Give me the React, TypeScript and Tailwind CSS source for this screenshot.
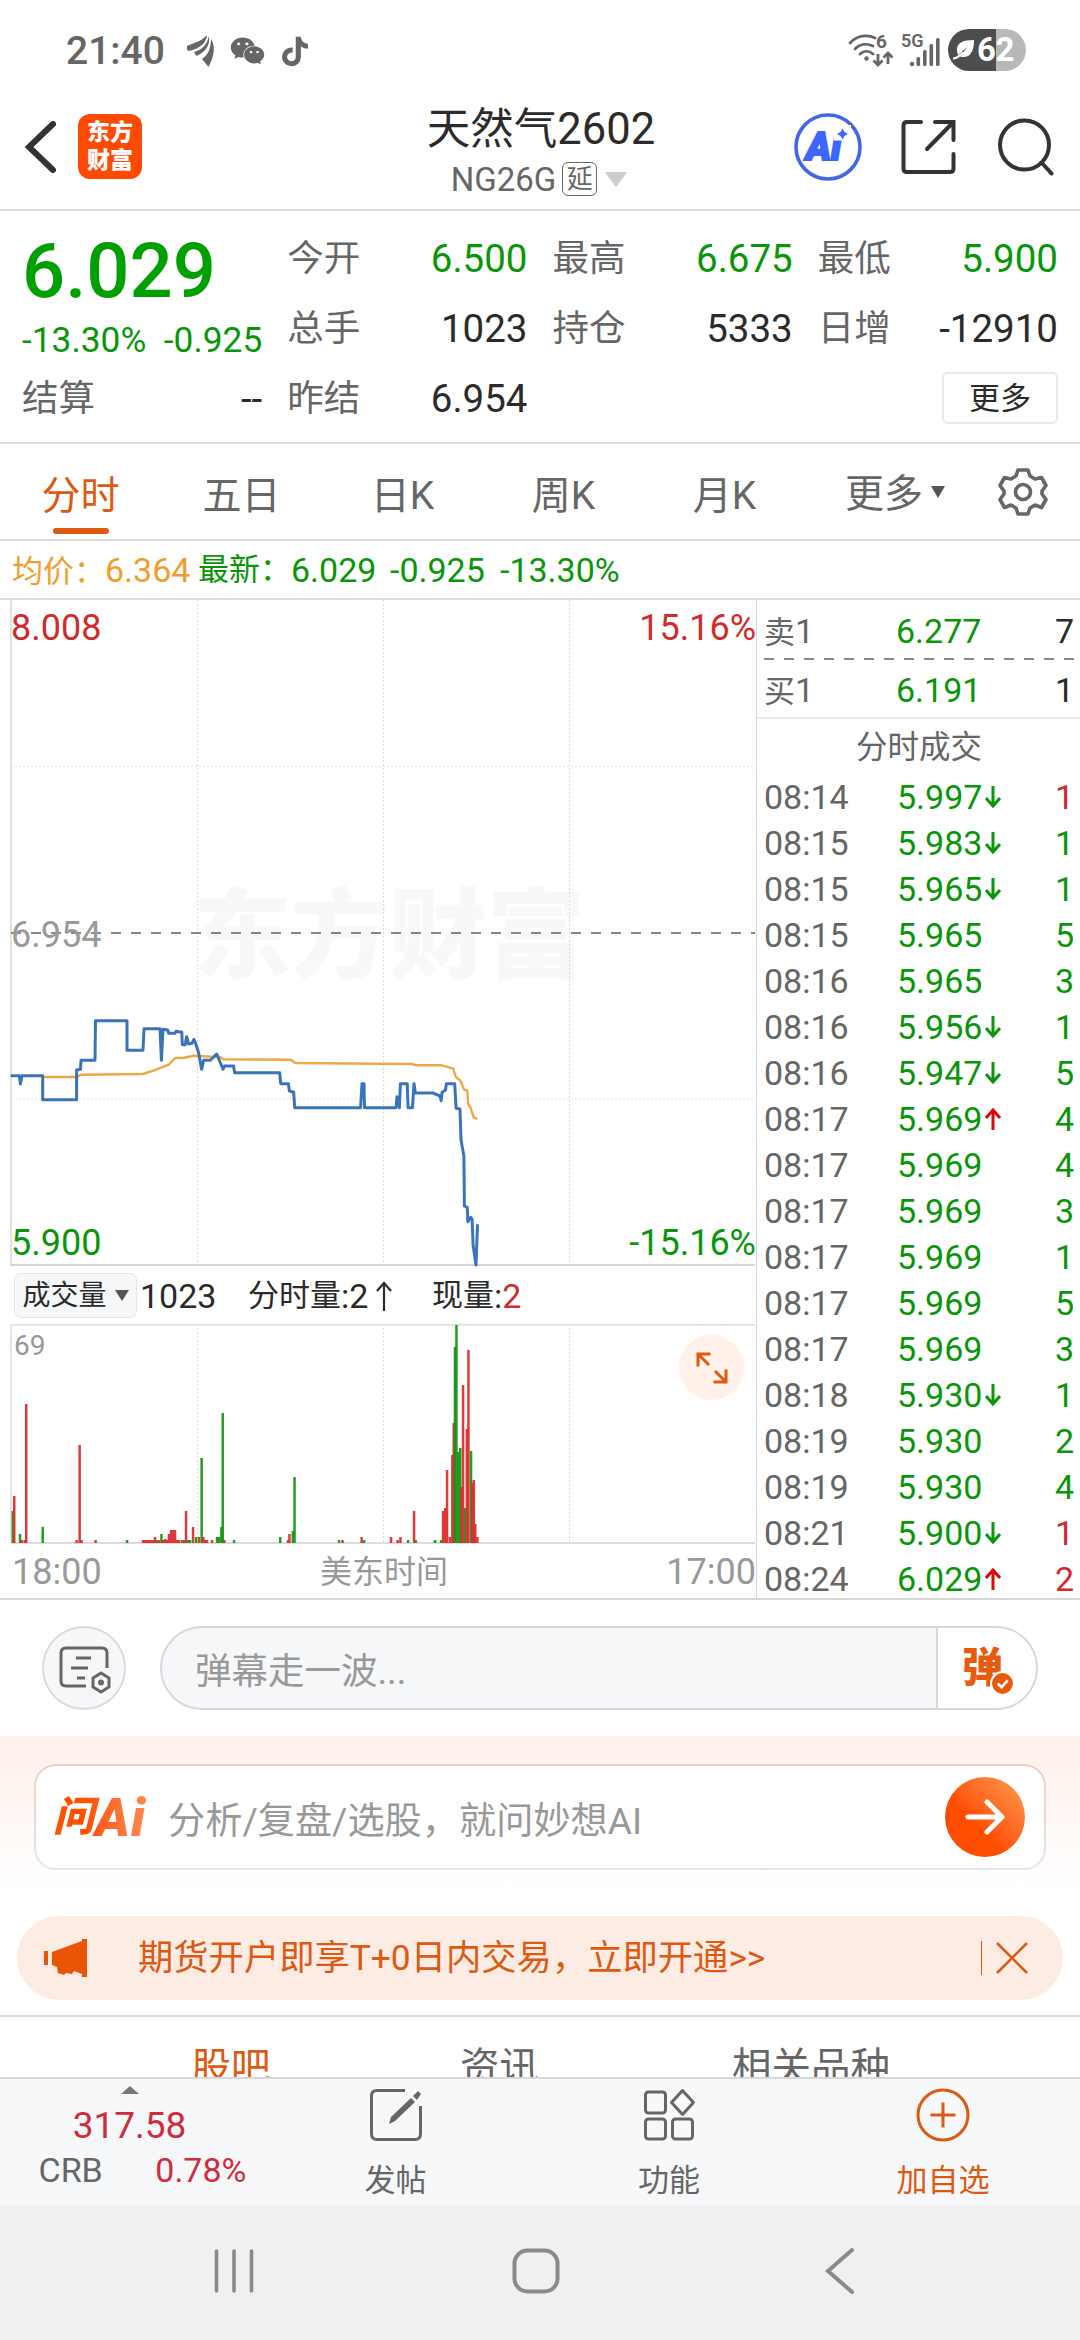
import React from "react";
import { FaTiktok, FaWeixin } from "react-icons/fa";

type Tone = "up" | "down" | "plain";

const TONE: Record<Tone, string> = {
  up: "text-[#d02c2c]",
  down: "text-[#0a960a]",
  plain: "text-[#2b2b2b]",
};

// ─── Data ──────────────────────────────────────────────────────────────────
const QUOTES: { label: string; value: string; tone: Tone }[] = [
  { label: "今开", value: "6.500", tone: "down" },
  { label: "最高", value: "6.675", tone: "down" },
  { label: "最低", value: "5.900", tone: "down" },
  { label: "总手", value: "1023", tone: "plain" },
  { label: "持仓", value: "5333", tone: "plain" },
  { label: "日增", value: "-12910", tone: "plain" },
];

const PERIODS = ["分时", "五日", "日K", "周K", "月K"];

type Trade = { time: string; price: string; dir?: "up" | "down"; qty: number; tone: Tone };

const TRADES: Trade[] = [
  { time: "08:14", price: "5.997", dir: "down", qty: 1, tone: "up" },
  { time: "08:15", price: "5.983", dir: "down", qty: 1, tone: "down" },
  { time: "08:15", price: "5.965", dir: "down", qty: 1, tone: "down" },
  { time: "08:15", price: "5.965", qty: 5, tone: "down" },
  { time: "08:16", price: "5.965", qty: 3, tone: "down" },
  { time: "08:16", price: "5.956", dir: "down", qty: 1, tone: "down" },
  { time: "08:16", price: "5.947", dir: "down", qty: 5, tone: "down" },
  { time: "08:17", price: "5.969", dir: "up", qty: 4, tone: "down" },
  { time: "08:17", price: "5.969", qty: 4, tone: "down" },
  { time: "08:17", price: "5.969", qty: 3, tone: "down" },
  { time: "08:17", price: "5.969", qty: 1, tone: "down" },
  { time: "08:17", price: "5.969", qty: 5, tone: "down" },
  { time: "08:17", price: "5.969", qty: 3, tone: "down" },
  { time: "08:18", price: "5.930", dir: "down", qty: 1, tone: "down" },
  { time: "08:19", price: "5.930", qty: 2, tone: "down" },
  { time: "08:19", price: "5.930", qty: 4, tone: "down" },
  { time: "08:21", price: "5.900", dir: "down", qty: 1, tone: "up" },
  { time: "08:24", price: "6.029", dir: "up", qty: 2, tone: "up" },
];

const PRICE_LINE =
  "10.7,475.7 19.4,475.7 20.4,484 22,475.7 42.7,475.7 42.7,499.7 76.6,499.7 76.6,470 80.5,469.3 81,460.3 95,460.3 95.5,420.7 127,420.7 127,450.3 143,450.3 144,428.7 160,428.7 161.4,460.3 163,429.3 167.7,430 168.7,433.3 175,433.3 176,431.3 181.8,432.3 182.3,444.7 185.2,444.7 186.6,436.7 188.6,444 192,443.3 193.9,439.3 196.3,445.3 198.7,453.3 201.6,469.3 203.6,460.3 210.4,460.3 216.7,454 223,469.3 224.4,466 233.6,466 234.6,472.7 279.7,472.7 280.7,483.7 288.4,483.7 289.4,491 293.7,492.3 294.7,507.7 360.6,507.7 362,483.7 364,483.7 364.5,507.7 396,507.7 397,496.7 399.4,507.7 400.4,483.7 407.2,483.7 408.1,507.7 412.5,507.7 414,483.7 415.4,493 432.9,493 440.1,496 441.1,500.7 442.1,492.3 445.5,490 446.4,483.7 454.7,483.7 456.1,508.3 460,509 461,540 463.9,556 464.4,606 467.3,607.3 467.8,621.7 470.7,617.3 472.1,619.3 473.1,645 476,665 477.5,624.3";

const AVG_LINE =
  "42.7,477 76.6,477 81.4,474.7 143,474 154.1,470.3 168.7,464.7 175,458 184.2,457.7 193.9,455.7 220.5,457.3 223,459.3 290.8,459.7 295.2,463 412,464 415.9,465.3 442,465.3 453.2,468.7 456.1,477.3 460.5,480.7 463.9,489.3 467.3,490.7 468.2,504 470.7,508 473.6,517.3 477.5,519";

// [x, height, up]
const VOLUME: [number, number, 0 | 1][] = [
  [12.8, 32, 0], [14.2, 47, 1], [20, 9, 0], [22, 3, 1], [25, 3, 1], [26.2, 139, 1], [42.7, 16, 0],
  [76.6, 3, 1], [79.6, 98, 1], [81.5, 3, 1], [95.5, 3, 1], [127, 3, 0],
  [143, 3, 1], [145, 3, 1], [147, 3, 1], [149, 3, 1], [151, 3, 1], [153, 3, 1], [155, 6, 1], [157, 3, 0],
  [159, 3, 1], [161.4, 9, 0], [163, 3, 1], [165, 4, 1], [167, 3, 1], [169, 9, 1], [171, 13, 1], [173, 13, 1],
  [175, 13, 1], [177, 3, 1], [179, 3, 1], [182, 3, 0], [184, 3, 1], [186, 32, 1], [188, 3, 0], [190, 3, 0],
  [193, 16, 1], [196, 6, 0], [199, 6, 1], [201.6, 85, 0], [203.3, 6, 1], [205, 3, 1], [207, 3, 1], [212, 3, 1],
  [217, 6, 0], [219, 6, 0], [221.3, 16, 0], [222.7, 130, 0], [224.4, 3, 1], [234, 3, 0],
  [280.2, 6, 0], [288, 3, 1], [289.4, 9, 1], [292.8, 12, 0], [294.5, 66, 0],
  [339, 3, 0], [342.5, 3, 1], [361.6, 6, 1], [364, 3, 0], [391, 6, 1], [397.5, 3, 1], [400.4, 6, 1],
  [408, 3, 0], [414, 32, 1], [415.6, 3, 0], [435, 3, 0], [441, 3, 0], [443, 32, 1], [445.2, 35, 1],
  [447, 73, 1], [449.8, 6, 1], [452.3, 88, 1], [453.7, 120, 1], [454.9, 196, 0], [456.4, 218, 0],
  [458.3, 91, 0], [460.2, 95, 0], [461.6, 56, 1], [463, 158, 1], [465, 35, 0], [466.8, 114, 1],
  [468.4, 193, 1], [471, 92, 0], [472.2, 60, 1], [473.8, 63, 1], [475.2, 19, 1], [477.3, 6, 1],
];

// ─── Status bar ────────────────────────────────────────────────────────────
function StatusBar() {
  return (
    <div className="flex h-[70px] items-center justify-between pl-[66px] pr-[54px] text-[#666]">
      <div className="flex h-full items-center pt-[34px] pb-[2px]">
        <span className="w-[121px] text-[39px] leading-none font-medium">21:40</span>
        <svg className="mr-4 h-[32px] w-[27px]" viewBox="0 0 27 32" fill="currentColor">
          <path d="M0 11C6 8 14 7 20 0c0 7-8 15-19 16C0 15 0 13 0 11Z" />
          <path d="M21.500 1c3 8-4 17-12 20L7 17c8-2 14-8 14.500-16Z" />
          <path d="M24 4c2 3 3 6 2.800 12-.5 6-3 11-5.300 16L15 24c6-4 9-11 9-20Z" />
        </svg>
        <FaWeixin className="mr-[17px] h-[32px] w-[35px]" />
        <FaTiktok className="h-[31px] w-[26px]" />
      </div>
      <div className="flex h-full items-center pt-[30px]">
        <svg className="mr-[8px] h-[34px] w-[44px] overflow-visible" viewBox="0 0 44 34" fill="none" stroke="currentColor" strokeWidth="2.800">
          <path d="M1 10C8 2.500 18 1 26 5M6 16c5-5 12-6 18-3M11 21c4-3.500 9-3.500 13 0" strokeLinecap="round" />
          <circle cx="17.500" cy="25.500" r="2.200" fill="currentColor" stroke="none" />
          <path d="M29 21v11m-4.500-4.500L29 32l4.500-4.500M39 31V20m-4.500 4.500L39 20l4.500 4.500" />
          <text x="27" y="15" fontSize="19" fontWeight="700" fill="currentColor" stroke="none">6</text>
        </svg>
        <svg className="mr-[8px] h-[34px] w-[39px] overflow-visible" viewBox="0 0 39 34" fill="currentColor">
          <text x="0" y="14" fontSize="18" fontWeight="600">5G</text>
          <circle cx="11" cy="31" r="2.200" />
          <rect x="15.500" y="24" width="3.600" height="9" rx="1.500" />
          <rect x="22" y="17" width="3.600" height="16" rx="1.500" />
          <rect x="28.500" y="11" width="3.600" height="22" rx="1.500" />
          <rect x="35" y="5" width="3.600" height="28" rx="1.500" />
        </svg>
        <div className="mb-[1px] flex h-[42px] w-[78px] items-center rounded-full bg-linear-to-r from-[#4d4d4d] from-62% to-[#b8b8b8] to-62% pl-[5px] text-white">
          <svg className="h-[20px] w-[22px]" viewBox="0 0 22 20">
            <path d="M21 0C9 0 4 3 4 10c0 2 .3 3.500 1.200 5l9-8-7 9.500c8 2.500 14-3 13.800-16.500Z" fill="#fff" />
            <path d="M.5 18.500c4-.5 6-2 9-5.500" stroke="#fff" strokeWidth="2.200" fill="none" strokeLinecap="round" />
          </svg>
          <span className="ml-[2px] text-[33px] leading-none font-bold tracking-[-0.5px]">62</span>
        </div>
      </div>
    </div>
  );
}

// ─── Title bar ─────────────────────────────────────────────────────────────
function Header() {
  return (
    <header className="grid h-[141px] grid-cols-[1fr_auto_1fr] items-center border-b-2 border-[#dcdcdc] pl-[26px] pr-[26px]">
      <div className="-ml-[2px] flex items-center gap-[22px] pt-[14px]">
        <svg className="h-[52px] w-[32px]" viewBox="0 0 32 52" fill="none" stroke="#333" strokeWidth="6">
          <path d="M29 3 5 26l24 23" strokeLinecap="round" />
        </svg>
        <div className="flex h-[65px] w-[64px] flex-col items-center justify-center rounded-[12px] bg-[#ff4a04] text-[23px] leading-[28px] font-black text-white">
          <span>东方</span>
          <span>财富</span>
        </div>
      </div>
      <div className="flex flex-col items-center pt-[23px]">
        <h1 className="pl-[2px] text-[43.5px] leading-[56px] text-[#2b2b2b]">天然气2602</h1>
        <div className="mr-[2px] flex h-[42px] items-center text-[33px] leading-none text-[#666]">
          <span>NG26G</span>
          <span className="ml-[6px] flex h-[34px] w-[35px] items-center justify-center rounded-[6px] border border-[#666] text-[26px]">延</span>
          <svg className="ml-[8px] h-[15px] w-[22px]" viewBox="0 0 22 15" fill="#ccc">
            <path d="M1 0h20q1 0 .5 1L12 14q-1 1-2 0L.5 1Q0 0 1 0Z" />
          </svg>
        </div>
      </div>
      <div className="flex items-center justify-end pt-[14px]">
        <svg className="mr-[38px] h-[70px] w-[70px]" viewBox="0 0 70 70">
          <circle cx="35" cy="35" r="32" fill="none" stroke="#4068e6" strokeWidth="3.600" />
          <text x="13" y="48" fontSize="38" fontWeight="900" fontStyle="italic" fill="#3b67ff" stroke="#3b67ff" strokeWidth="2">Ai</text>
          <path d="M41 13h17v15.500H41Z" fill="#fff" />
          <path d="m49.500 16.500 2 3.500 3.500 2-3.500 2-2 3.500-2-3.500-3.500-2 3.500-2Z" fill="#3b67ff" />
        </svg>
        <svg className="mr-[42px] h-[56px] w-[55px]" viewBox="0 0 55 56" fill="none" stroke="#333" strokeWidth="4">
          <path d="M20 3H6Q2.500 3 2.500 6.500v43Q2.500 53 6 53h43q3.500 0 3.500-3.500V35" strokeLinecap="round" />
          <path d="M34 3h18.500v18M52 3.500 26 30" strokeLinecap="round" />
        </svg>
        <svg className="h-[58px] w-[56px]" viewBox="0 0 56 58" fill="none" stroke="#333" strokeWidth="4">
          <circle cx="26.500" cy="27" r="24.500" />
          <path d="m43.500 44.500 10 11" strokeLinecap="round" />
        </svg>
      </div>
    </header>
  );
}

// ─── Quote summary ─────────────────────────────────────────────────────────
function QuoteCell({ label, value, tone }: { label: string; value: string; tone: Tone }) {
  return (
    <div className="flex items-center justify-between leading-none">
      <span className="pt-[1px] text-[36.5px] text-[#666]">{label}</span>
      <span className={`text-[38.5px] ${TONE[tone]}`}>{value}</span>
    </div>
  );
}

function QuotePanel() {
  return (
    <section className="grid h-[233px] grid-cols-4 grid-rows-[70px_70px_70px] gap-x-[25px] border-b-2 border-[#dcdcdc] px-[22px] pt-[13px]">
      <div className="row-span-2 flex flex-col">
        <span className="mt-[7px] text-[76px] leading-[80px] font-medium text-[#00a000]">6.029</span>
        <div className="mt-[9px] flex justify-between text-[35.3px] leading-[40px] whitespace-nowrap text-[#0a960a]">
          <span>-13.30%</span>
          <span>-0.925</span>
        </div>
      </div>
      {QUOTES.map((q) => (
        <QuoteCell key={q.label} {...q} />
      ))}
      <QuoteCell label="结算" value="--" tone="plain" />
      <QuoteCell label="昨结" value="6.954" tone="plain" />
      <div className="col-span-2 flex items-center justify-end pb-[2px]">
        <button className="h-[52px] w-[116px] rounded-[6px] border-2 border-[#e8eaeb] text-[31px] leading-none text-[#2b2b2b]">更多</button>
      </div>
    </section>
  );
}

// ─── Period tabs ───────────────────────────────────────────────────────────
function PeriodTabs() {
  return (
    <nav className="flex h-[97px] items-center border-b-2 border-[#dcdcdc] text-[39px] leading-none text-[#666]">
      {PERIODS.map((p, i) => (
        <div key={p} className={`flex w-[161px] flex-col items-center pt-[25px] ${i === 0 ? "text-[#dd5a12]" : ""}`}>
          <span className="pt-[2px]">{p}</span>
          <span className={`mt-[12px] h-[6px] w-[56px] rounded-full ${i === 0 ? "bg-[#dd5a12]" : ""}`} />
        </div>
      ))}
      <div className="ml-[40px] flex items-center gap-[8px] pt-[6px]">
        <span>更多</span>
        <svg className="mb-[6px] h-[12px] w-[14px]" viewBox="0 0 14 12" fill="#555">
          <path d="M0 0h14L7 12Z" />
        </svg>
      </div>
      <svg className="mt-[1px] ml-[53px] h-[50px] w-[50px]" viewBox="0 0 50 50" fill="none" stroke="#666" strokeWidth="3.600" strokeLinejoin="round">
        <path d="M20 3h10l2 6 5 3 6.500-1.500 4.500 8-4 5.500v3l4 5.500-4.500 8L37 38l-5 3-2 6H20l-2-6-5-3-6.500 2.500-4.500-8L6 27v-3l-4-5.500 4.500-8L13 12l5-3Z" />
        <circle cx="25" cy="25" r="7.500" />
      </svg>
    </nav>
  );
}

// ─── Price chart ───────────────────────────────────────────────────────────
function PriceChart() {
  return (
    <div className="relative h-[667px] w-[756px] text-[36px] leading-none">
      <span className="absolute top-[288px] left-[193px] text-[98px] font-black text-[#f8f8f8]">东方财富</span>
      <svg className="absolute inset-0" width="756" height="667" viewBox="0 0 756 667" fill="none">
        <path d="M11 0v666M197.500 0v666M383.500 0v666M569.500 0v666" stroke="#dadada" strokeDasharray="2 2" />
        <path d="M11 0v666" stroke="#dcdcdc" strokeWidth="1.500" />
        <path d="M11 166.500h744M11 499h744" stroke="#e2e2e2" strokeDasharray="2 2" />
        <path d="M11 665h744" stroke="#d5d5d5" strokeWidth="2" />
        <path d="M11 333h744" stroke="#888" strokeWidth="2" strokeDasharray="10 10" />
        <polyline points={AVG_LINE} stroke="#efa845" strokeWidth="2.400" strokeLinejoin="round" />
        <polyline points={PRICE_LINE} stroke="#3a74b8" strokeWidth="3" strokeLinejoin="round" />
      </svg>
      <span className="absolute top-[10px] left-[11px] text-[#d02c2c]">8.008</span>
      <span className="absolute top-[10px] right-0 text-[#d02c2c]">15.16%</span>
      <span className="absolute top-[317px] left-[11px] text-[#999]">6.954</span>
      <span className="absolute top-[625px] left-[11px] text-[#0a960a]">5.900</span>
      <span className="absolute top-[625px] right-0 text-[#0a960a]">-15.16%</span>
    </div>
  );
}

// ─── Volume chart ──────────────────────────────────────────────────────────
function VolumeChart() {
  return (
    <>
      <div className="flex h-[57px] items-center pl-[14px] text-[34px] leading-none text-[#2b2b2b]">
        <div className="flex h-[45px] w-[123px] items-center justify-center gap-[8px] rounded-[7px] border border-[#e2e5ea] bg-[#f6f7f9] text-[28px]">
          <span>成交量</span>
          <svg className="h-[11px] w-[14px]" viewBox="0 0 14 11" fill="#555">
            <path d="M0 0h14L7 11Z" />
          </svg>
        </div>
        <span className="w-[109px] pl-[3px]">1023</span>
        <span className="flex w-[186px] items-center pl-[2px]">
          <span className="text-[31px]">分时量</span>:2
          <svg className="ml-[7px] h-[30px] w-[18px]" viewBox="0 0 18 30" fill="none" stroke="#2b2b2b" strokeWidth="2.200">
            <path d="M9 30V2M2 10l7-8 7 8" />
          </svg>
        </span>
        <span className="text-[31px]">现量</span>:<span className="text-[#d02c2c]">2</span>
      </div>
      <div className="relative h-[220px] w-[756px]">
        <svg width="756" height="220" viewBox="0 0 756 220" fill="none">
          <path d="M197.500 0v219M383.500 0v219M569.500 0v219" stroke="#dadada" strokeDasharray="2 2" />
          <path d="M11 219V.7h744" stroke="#dcdcdc" strokeWidth="1.500" />
          <path d="M11 219h744" stroke="#dcdcdc" strokeWidth="2" />
          {VOLUME.map(([x, h, up]) => (
            <rect key={x} x={x - 1.2} y={219 - h} width="2.500" height={h} fill={up ? "#dc2a2a" : "#129412"} fillOpacity="0.92" />
          ))}
        </svg>
        <span className="absolute top-[8px] left-[14px] text-[28px] leading-none text-[#999]">69</span>
        <span className="absolute top-[11px] left-[679px] flex size-[65px] items-center justify-center rounded-full bg-[#fff0e9]">
          <svg width="32" height="32" viewBox="0 0 32 32" fill="none" stroke="#dd5a12" strokeWidth="3">
            <path d="M2 14.500V2h12.500M2.500 2.500 13 13M30 17.500V30H17.500M29.500 29.500 19 19" />
          </svg>
        </span>
      </div>
      <div className="grid h-[55px] grid-cols-3 items-center pl-[12px] text-[36px] leading-none text-[#999]">
        <span className="pt-[1px]">18:00</span>
        <span className="pt-[1px] text-center text-[32px]">美东时间</span>
        <span className="pt-[1px] text-right">17:00</span>
      </div>
    </>
  );
}

// ─── Order book and trades ─────────────────────────────────────────────────
function TradeArrow({ dir }: { dir: "up" | "down" }) {
  return (
    <svg className={`ml-[3px] h-[22px] w-[16px] ${dir === "up" ? "rotate-180" : ""}`} viewBox="0 0 16 22" fill="none" stroke={dir === "up" ? "#d80c0c" : "#0a960a"} strokeWidth="3">
      <path d="M8 0v20M1 12l7 8 7-8" />
    </svg>
  );
}

function BookRow({ side, price, qty }: { side: string; price: string; qty: number }) {
  return (
    <div className="grid h-[59px] grid-cols-[132px_1fr_auto] items-center">
      <span className="text-[#666]"><span className="text-[31px]">{side}</span>1</span>
      <span className="text-[#0a960a]">{price}</span>
      <span className="text-[#2b2b2b]">{qty}</span>
    </div>
  );
}

function TradePanel() {
  return (
    <aside className="flex-1 border-l border-[#d8d8d8] text-[34px] leading-none">
      <div className="h-[119px] border-b-2 border-[#e8eaec] pt-[1px] pr-[6px] pl-[7px]">
        <BookRow side="卖" price="6.277" qty={7} />
        <svg className="-mt-[2px] block h-[2px] w-[310px]" viewBox="0 0 310 2">
          <path d="M0 1h310" stroke="#888" strokeWidth="2" strokeDasharray="10 10" />
        </svg>
        <BookRow side="买" price="6.191" qty={1} />
      </div>
      <h2 className="flex h-[54px] items-center justify-center pt-[4px] pl-[1px] text-[31.5px] text-[#666]">分时成交</h2>
      <div className="pr-[6px] pl-[7px]">
        {TRADES.map((t, i) => (
          <div key={i} className="grid h-[46px] grid-cols-[133px_1fr_auto] items-center pt-[1px]">
            <span className="text-[#666]">{t.time}</span>
            <span className="flex items-center text-[#0a960a]">
              {t.price}
              {t.dir && <TradeArrow dir={t.dir} />}
            </span>
            <span className={TONE[t.tone]}>{t.qty}</span>
          </div>
        ))}
      </div>
    </aside>
  );
}

// ─── Comment bar ───────────────────────────────────────────────────────────
function CommentBar() {
  return (
    <div className="flex h-[136px] items-center px-[42px]">
      <div className="flex size-[84px] items-center justify-center rounded-full border-2 border-[#d8dce1] bg-[#f6f7f9]">
        <svg className="mt-[4px] ml-[2px] h-[48px] w-[52px]" viewBox="0 0 52 48" fill="none" stroke="#666" strokeWidth="3">
          <path d="M27 40H7q-5 0-5-5V7q0-5 5-5h36q5 0 5 5v15" />
          <path d="M17 12h15M12 22h17M18 32h8" />
          <path d="m42 27 8 5v9l-8 5-8-5v-9Z" />
          <circle cx="42" cy="36.500" r="3" fill="#666" stroke="none" />
        </svg>
      </div>
      <div className="ml-[34px] flex h-[84px] w-[878px] items-center overflow-hidden rounded-full border-2 border-[#d5d9de] bg-[#f6f7f9]">
        <span className="flex-1 pt-[9px] pl-[33px] text-[36.5px] leading-none text-[#999]">弹幕走一波...</span>
        <div className="relative flex h-full w-[100px] items-center border-l-2 border-[#d5d9de] bg-white pl-[24px]">
          <span className="text-[41px] leading-none font-black text-[#e85a0c]">弹</span>
          <svg className="absolute top-[43px] left-[52px]" width="25" height="25" viewBox="0 0 24 24" fill="none">
            <circle cx="12" cy="12" r="11" fill="#e85a0c" stroke="#fff" strokeWidth="2" />
            <path d="m7.500 12 3.500 3.500 6-6.500" stroke="#fff" strokeWidth="2.400" />
          </svg>
        </div>
      </div>
    </div>
  );
}

// ─── AI search ─────────────────────────────────────────────────────────────
function AskAi() {
  return (
    <div className="h-[154px] bg-linear-to-b from-[#fff0ea] to-white px-[34px] pt-[28px]">
      <div className="h-[106px] rounded-[22px] bg-linear-to-b from-[#f3cbc2] to-[#e0e6ee] p-[2px]">
        <div className="flex h-full items-center rounded-[20px] bg-white pr-[19px] pl-[17px]">
          <span className="flex w-[115px] items-center bg-linear-to-r from-[#ff5200] from-30% to-[#ff9a60] bg-clip-text text-[41px] leading-[56px] font-black text-transparent italic">
            <span className="pb-[1px]">问</span>
            <span className="ml-[1px] pt-[2px] text-[53px] tracking-[1px]">Ai</span>
          </span>
          <span className="flex-1 pt-[9px] text-[37.2px] leading-none text-[#999]">分析/复盘/选股，就问妙想AI</span>
          <span className="flex size-[80px] items-center justify-center rounded-full bg-linear-to-tr from-[#ff4e00] from-40% to-[#ff9a4a]">
            <svg width="40" height="36" viewBox="0 0 40 36" fill="none" stroke="#fff" strokeWidth="5" strokeLinecap="round" strokeLinejoin="round">
              <path d="M3 18h33M22 3l15 15-15 15" />
            </svg>
          </span>
        </div>
      </div>
    </div>
  );
}

// ─── Promo banner ──────────────────────────────────────────────────────────
function Banner() {
  return (
    <div className="h-[127px] border-b-2 border-[#dcdcdc] px-[17px] pt-[26px]">
      <div className="flex h-[84px] items-center rounded-full bg-[#fdece3] pr-[35px] pl-[27px] text-[35.3px] leading-none text-[#dd5a12]">
        <svg className="h-[38px] w-[43px]" viewBox="0 0 43 38" fill="#ea5504">
          <path d="M0 12h4v14H0ZM8 13 38 2V0h5v38h-5v-3l-8-3-2 3-6-1-2 2-6-2-1-6-5-2Z" />
        </svg>
        <span className="ml-[51px] flex-1 pt-[2px]">期货开户即享T+0日内交易，立即开通&gt;&gt;</span>
        <span className="h-[34px] w-px bg-[#dd5a12]" />
        <svg className="ml-[14px] h-[32px] w-[32px]" viewBox="0 0 32 32" stroke="#dd5a12" strokeWidth="2.600">
          <path d="m1 1 30 30M31 1 1 31" />
        </svg>
      </div>
    </div>
  );
}

// ─── Bottom bar ────────────────────────────────────────────────────────────
function BottomItem({ label, className, children }: { label: string; className: string; children: React.ReactNode }) {
  return (
    <div className={`flex flex-col items-center pt-[9px] ${className}`}>
      <svg className="size-[54px]" viewBox="0 0 54 54" fill="none" stroke="currentColor" strokeWidth="3">
        {children}
      </svg>
      <span className="mt-[23px] text-[31px] leading-none">{label}</span>
    </div>
  );
}

function BottomBar() {
  return (
    <footer className="flex h-[128px] border-t-2 border-[#d8d8d8] bg-[#f7f8fa] text-[#666]">
      <div className="flex w-[259px] flex-col items-center pt-[7px] leading-none">
        <svg className="h-[8px] w-[18px]" viewBox="0 0 18 8" fill="#777">
          <path d="M0 8 9 0l9 8Z" />
        </svg>
        <span className="mt-[13px] text-[37px] text-[#d02c3c]">317.58</span>
        <div className="mt-[9px] ml-[26px] flex w-[208px] justify-between text-[34px]">
          <span>CRB</span>
          <span className="text-[#d02c3c]">0.78%</span>
        </div>
      </div>
      <BottomItem label="发帖" className="w-[273px]">
        <path d="M36 2.500H8Q2.500 2.500 2.500 8v38q0 5.500 5.500 5.500h38q5.500 0 5.500-5.500V18" />
        <path d="m20 36 2-7 20-19 4 4-20 19ZM44 8l5-5 3 3-4 6Z" fill="currentColor" stroke="none" />
      </BottomItem>
      <BottomItem label="功能" className="w-[274px]">
        <rect x="3.500" y="4" width="20" height="21" rx="3" />
        <rect x="3.500" y="31" width="20" height="20" rx="3" />
        <rect x="30.500" y="31" width="20" height="20" rx="3" />
        <path d="m40.500 2.500 11 12-11 12-11-12Z" strokeLinejoin="round" />
      </BottomItem>
      <BottomItem label="加自选" className="w-[274px] text-[#dd5a12]">
        <circle cx="27" cy="27" r="25" />
        <path d="M27 14.500v25M14.500 27h25" />
      </BottomItem>
    </footer>
  );
}

function SystemNav() {
  return (
    <div className="flex h-[135px] items-center bg-[#f0f0f2] pb-[3px] pl-[213px]">
      <svg width="42" height="46" viewBox="0 0 42 46" stroke="#8a8a8c" strokeWidth="3.600" strokeLinecap="round">
        <path d="M3.500 3v40M21 3v40M38.500 3v40" />
      </svg>
      <svg className="ml-[257px]" width="48" height="46" viewBox="0 0 48 46" fill="none" stroke="#8a8a8c" strokeWidth="4">
        <rect x="2.500" y="2.500" width="43" height="41" rx="13" />
      </svg>
      <svg className="ml-[265px]" width="30" height="46" viewBox="0 0 30 46" fill="none" stroke="#8a8a8c" strokeWidth="4" strokeLinecap="round">
        <path d="M27 2 3 23l24 21" />
      </svg>
    </div>
  );
}

export default function App() {
  return (
    <main className="h-[2340px] w-[1080px] overflow-hidden bg-white font-[Roboto,'Noto_Sans_CJK_SC',sans-serif]">
      <StatusBar />
      <Header />
      <QuotePanel />
      <PeriodTabs />
      <div className="flex h-[59px] items-center border-b-2 border-[#dcdcdc] pl-[12px] text-[34px] leading-none text-[#0a960a]">
        <span className="w-[186px] text-[#efa02c]"><span className="text-[31px]">均价：</span>6.364</span>
        <span className="text-[31px]">最新：</span>
        <span className="w-[99px]">6.029</span>
        <span className="w-[110px]">-0.925</span>
        <span>-13.30%</span>
      </div>
      <div className="flex h-[1000px] border-b-2 border-[#d8d8d8]">
        <div className="w-[756px]">
          <PriceChart />
          <VolumeChart />
        </div>
        <TradePanel />
      </div>
      <CommentBar />
      <AskAi />
      <Banner />
      <div className="flex h-[60px] overflow-hidden pt-[31px] pl-[96px] text-[39.5px] leading-none text-[#666]">
        <span className="w-[270px] text-center text-[#dd5a12]">股吧</span>
        <span className="w-[267px] text-center">资讯</span>
        <span className="w-[356px] text-center">相关品种</span>
      </div>
      <BottomBar />
      <SystemNav />
    </main>
  );
}
